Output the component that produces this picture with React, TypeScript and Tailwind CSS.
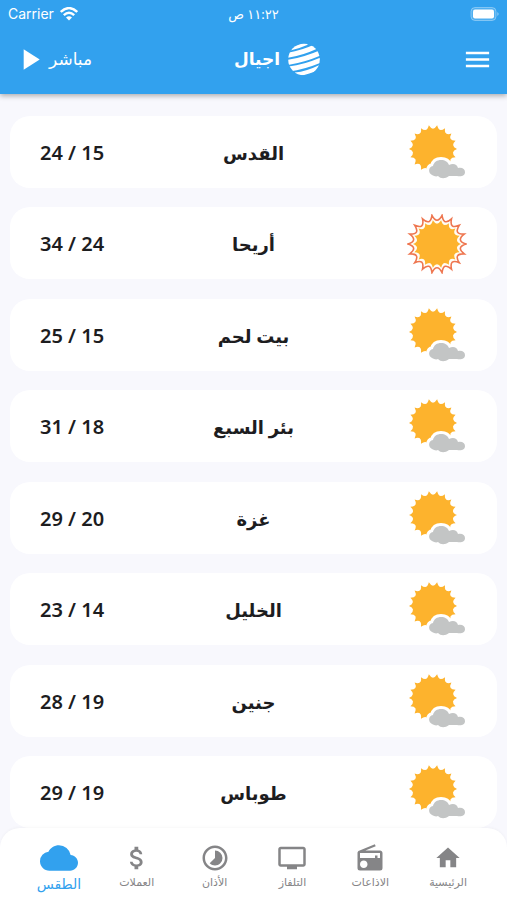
import type { ReactNode } from "react";
import { MdAttachMoney, MdCloud, MdHome, MdMenu, MdPlayArrow, MdRadio, MdTimelapse, MdTv } from "react-icons/md";

type City = { name: string; high: number; low: number; clear?: boolean };

const cities: City[] = [
  { name: "القدس", high: 24, low: 15 },
  { name: "أريحا", high: 34, low: 24, clear: true },
  { name: "بيت لحم", high: 25, low: 15 },
  { name: "بئر السبع", high: 31, low: 18 },
  { name: "غزة", high: 29, low: 20 },
  { name: "الخليل", high: 23, low: 14 },
  { name: "جنين", high: 28, low: 19 },
  { name: "طوباس", high: 29, low: 19 },
];

// Closed outline with pointed rays joined by inward curves.
function sunPath(cx: number, cy: number, outer: number, inner: number, rays: number) {
  const at = (r: number, i: number) => {
    const a = ((i - 0.5) / rays) * Math.PI * 2 - Math.PI / 2;
    return `${(cx + r * Math.cos(a)).toFixed(2)} ${(cy + r * Math.sin(a)).toFixed(2)}`;
  };
  let d = `M${at(outer, 0)}`;
  for (let i = 0; i < rays; i++) d += `Q${at(inner, i + 0.5)} ${at(outer, i + 1)}`;
  return d + "Z";
}

function CloudySun() {
  const cloud =
    "M25 52c-4-2-4-8 1-9 1-4 4-6 8-6 4 0 7 2 8 5 4-2 8-1 9 3 4-1 7 1 7 4 0 4-4 5-8 4-3 0-5 0-8 0-4 3-8 3-11 0-2 1-4 0-6-1Z";
  return (
    <svg viewBox="0 0 60 60" className="size-[60px]" aria-hidden="true">
      <path d={sunPath(26, 26, 24, 17, 18)} fill="#fdb32d" />
      <path d={cloud} fill="#fff" stroke="#fff" strokeWidth="6" strokeLinejoin="round" />
      <path d={cloud} fill="#c3c5c5" />
    </svg>
  );
}

function ClearSun() {
  return (
    <svg viewBox="0 0 60 60" className="size-[60px]" aria-hidden="true">
      <path d={sunPath(30, 30, 29, 19, 18)} fill="#fffdf5" stroke="#ee7650" strokeWidth="1.6" />
      <path d={sunPath(30, 30, 24, 17, 18)} fill="#fdb32d" />
    </svg>
  );
}

function Globe() {
  return (
    <svg viewBox="0 0 32 33" className="h-[33px] w-8" aria-hidden="true">
      <clipPath id="globe">
        <circle cx="16" cy="16.5" r="15.8" />
      </clipPath>
      <g clipPath="url(#globe)" fill="none" stroke="#fff">
        <path d="M1 6Q10 4 19 0" strokeWidth="3.6" />
        <path d="M-1 12.500Q14 10 28 3.500" strokeWidth="5" />
        <path d="M-1 19.500Q16 17 33 9.500" strokeWidth="5" />
        <path d="M1 26Q17 24 34 16.500" strokeWidth="5" />
        <path d="M7 31.500Q19 30.500 33 23.500" strokeWidth="4" />
      </g>
    </svg>
  );
}

function Wifi() {
  return (
    <svg viewBox="0 0 18 14" className="h-3.5 w-[18px]" aria-hidden="true" fill="none" stroke="#fff" strokeWidth="2.4">
      <path d="M.8 5Q9-2.800 17.200 5" />
      <path d="M3.800 8.200Q9 3.200 14.200 8.200" />
      <path d="M9 13.500 6 10.500Q9 8 12 10.500Z" fill="#fff" stroke="none" />
    </svg>
  );
}

const tabs: { label: string; icon: ReactNode; active?: boolean }[] = [
  { label: "الرئيسية", icon: <MdHome className="size-7" /> },
  { label: "الاذاعات", icon: <MdRadio className="size-[30px]" /> },
  { label: "التلفاز", icon: <MdTv className="size-[30px]" /> },
  { label: "الأذان", icon: <MdTimelapse className="size-[30px]" /> },
  { label: "العملات", icon: <MdAttachMoney className="size-[30px]" /> },
  { label: "الطقس", icon: <MdCloud className="size-[38px]" />, active: true },
];

export default function App() {
  return (
    <div dir="rtl" className="flex min-h-screen flex-col bg-[#f8f8fd] font-['Noto_Sans','DejaVu_Sans',sans-serif] text-[#1d1d1f]">
      <header className="bg-[#32a1ee] text-white shadow-[0_2px_5px_rgba(0,0,0,0.3)]">
        <div dir="ltr" className="grid h-7 grid-cols-3 items-center px-2">
          <div className="flex items-center gap-1.5 font-['Inter',sans-serif] text-[14px] leading-5">
            Carrier <Wifi />
          </div>
          <div dir="rtl" className="text-center text-[13px] leading-5">١١:٢٢ ص</div>
          <svg viewBox="0 0 30 14" className="h-3.5 w-[30px] justify-self-end" role="img" aria-label="البطارية">
            <rect x="2" y=".5" width="25" height="13" rx="4" fill="#fff" fillOpacity=".15" stroke="#fff" strokeOpacity=".35" />
            <rect x="4" y="2.500" width="21" height="9" rx="2" fill="#fff" />
            <path d="M28.500 5q2 2 0 4Z" fill="#fff" fillOpacity=".6" />
          </svg>
        </div>
        <div className="flex h-[66px] items-center justify-between pr-3.5 pb-1 pl-3">
          <button type="button" aria-label="القائمة">
            <MdMenu className="size-[31px]" />
          </button>
          <h1 className="flex items-center gap-2 text-[17px] leading-8 font-bold">
            <Globe />
            اجيال
          </h1>
          <button type="button" className="flex items-center gap-0.5 text-[17px] leading-6">
            مباشر
            <MdPlayArrow className="size-[35px]" />
          </button>
        </div>
      </header>

      <main className="flex flex-1 flex-col px-2.5 pt-[22px]">
        <ul className="flex flex-1 flex-col justify-between">
          {cities.map((city) => (
            <li key={city.name} className="flex h-[72px] items-center justify-between rounded-[20px] bg-white px-[30px] pt-0.5">
              <span className="w-16">{city.clear ? <ClearSun /> : <CloudySun />}</span>
              <h2 className="text-[18px] leading-7 font-bold">{city.name}</h2>
              <span dir="ltr" className="w-16 text-[20px] leading-7 font-semibold whitespace-nowrap">
                {city.high} / {city.low}
              </span>
            </li>
          ))}
        </ul>
      </main>

      <nav className="grid h-[72px] grid-cols-6 rounded-t-[20px] bg-white px-5 pt-3.5 shadow-[0_-1px_3px_rgba(0,0,0,0.03)]">
        {tabs.map((tab) => (
          <a
            key={tab.label}
            href="#"
            aria-current={tab.active ? "page" : undefined}
            className={
              tab.active
                ? "flex flex-col items-center text-[14px] leading-5 text-[#32a1ee]"
                : "flex flex-col items-center text-[11px] leading-4 text-[#858587]"
            }
          >
            <span className="flex h-8 items-center">{tab.icon}</span>
            {tab.label}
          </a>
        ))}
      </nav>
    </div>
  );
}
